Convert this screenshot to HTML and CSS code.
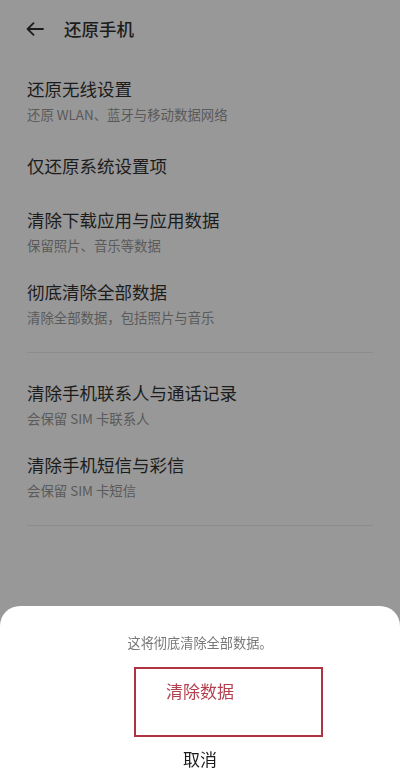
FILE: index.html
```html
<!DOCTYPE html>
<html lang="zh-CN">
<head>
<meta charset="utf-8">
<title>还原手机</title>
<link rel="stylesheet" href="styles.css">
</head>
<body>
<div class="page">
  <header class="header">
    <svg class="back" width="18" height="14" viewBox="0 0 18 14" aria-hidden="true">
      <path d="M17 7H2M7.5 1.2L1.6 7l5.9 5.8" fill="none" stroke="#1c1c1c" stroke-width="1.8" stroke-linecap="round" stroke-linejoin="round"/>
    </svg>
    <h1 class="title">还原手机</h1>
  </header>

  <section class="list">
    <div class="item">
      <div class="item-title">还原无线设置</div>
      <div class="item-sub">还原 WLAN、蓝牙与移动数据网络</div>
    </div>
    <div class="item single">
      <div class="item-title">仅还原系统设置项</div>
    </div>
    <div class="item">
      <div class="item-title">清除下载应用与应用数据</div>
      <div class="item-sub">保留照片、音乐等数据</div>
    </div>
    <div class="item">
      <div class="item-title">彻底清除全部数据</div>
      <div class="item-sub">清除全部数据，包括照片与音乐</div>
    </div>
  </section>
  <div class="divider"></div>
  <section class="list">
    <div class="item">
      <div class="item-title">清除手机联系人与通话记录</div>
      <div class="item-sub">会保留 SIM 卡联系人</div>
    </div>
    <div class="item">
      <div class="item-title">清除手机短信与彩信</div>
      <div class="item-sub">会保留 SIM 卡短信</div>
    </div>
  </section>
  <div class="divider"></div>
</div>

<div class="sheet">
  <p class="sheet-msg">这将彻底清除全部数据。</p>
  <div class="sheet-btn danger">清除数据</div>
  <div class="sheet-line"></div>
  <div class="sheet-btn cancel">取消</div>
</div>
<div class="highlight"></div>
</body>
</html>
```

FILE: styles.css
```css
html, body {
  margin: 0;
  padding: 0;
  width: 400px;
  height: 775px;
  overflow: hidden;
}
body {
  background: #989898;
  font-family: "Noto Sans CJK SC", "Noto Sans", sans-serif;
  color: #1c1c1c;
}
.page {
  padding: 0 27px;
}
.header {
  display: flex;
  align-items: center;
  padding-bottom: 6px;
  box-sizing: border-box;
  height: 64px;
}
.back {
  margin-left: -1px;
  flex: none;
}
.title {
  margin: 0 0 0 20px;
  font-size: 17.5px;
  font-weight: 500;
  line-height: 24px;
  color: #1c1c1c;
}
.list {
  display: flex;
  flex-direction: column;
}
.item {
  display: flex;
  flex-direction: column;
  padding: 13px 0 13px;
  height: 72px;
  box-sizing: border-box;
}
.item.single {
  height: 59px;
  justify-content: center;
  padding: 0;
}
.item-title {
  font-size: 17.5px;
  line-height: 24px;
  color: #1c1c1c;
}
.item-sub {
  margin-top: 4px;
  font-size: 13.4px;
  line-height: 18px;
  color: #5a5a5a;
}
.divider {
  height: 1px;
  background: #8c8c8c;
  margin: 13px 0 15px;
}
.sheet {
  position: fixed;
  left: 0;
  right: 0;
  top: 606px;
  bottom: 0;
  background: #ffffff;
  border-radius: 20px 20px 0 0;
  overflow: hidden;
  display: flex;
  flex-direction: column;
}
.sheet-msg {
  margin: 28px 0 0;
  font-size: 13.2px;
  line-height: 18px;
  color: #777777;
  text-align: center;
}
.sheet-btn {
  display: flex;
  align-items: center;
  justify-content: center;
  font-size: 17px;
  line-height: 24px;
  flex: none;
}
.sheet-btn.danger {
  height: 78px;
  color: #b3404f;
}
.sheet-btn.cancel {
  height: 57px;
  color: #1c1c1c;
}
.sheet-line {
  height: 1px;
  margin: 0 27px;
  background: #eeeeee;
}
.highlight {
  position: fixed;
  left: 134px;
  top: 667px;
  width: 189px;
  height: 70px;
  box-sizing: border-box;
  border: 2px solid #ad3440;
}
```
